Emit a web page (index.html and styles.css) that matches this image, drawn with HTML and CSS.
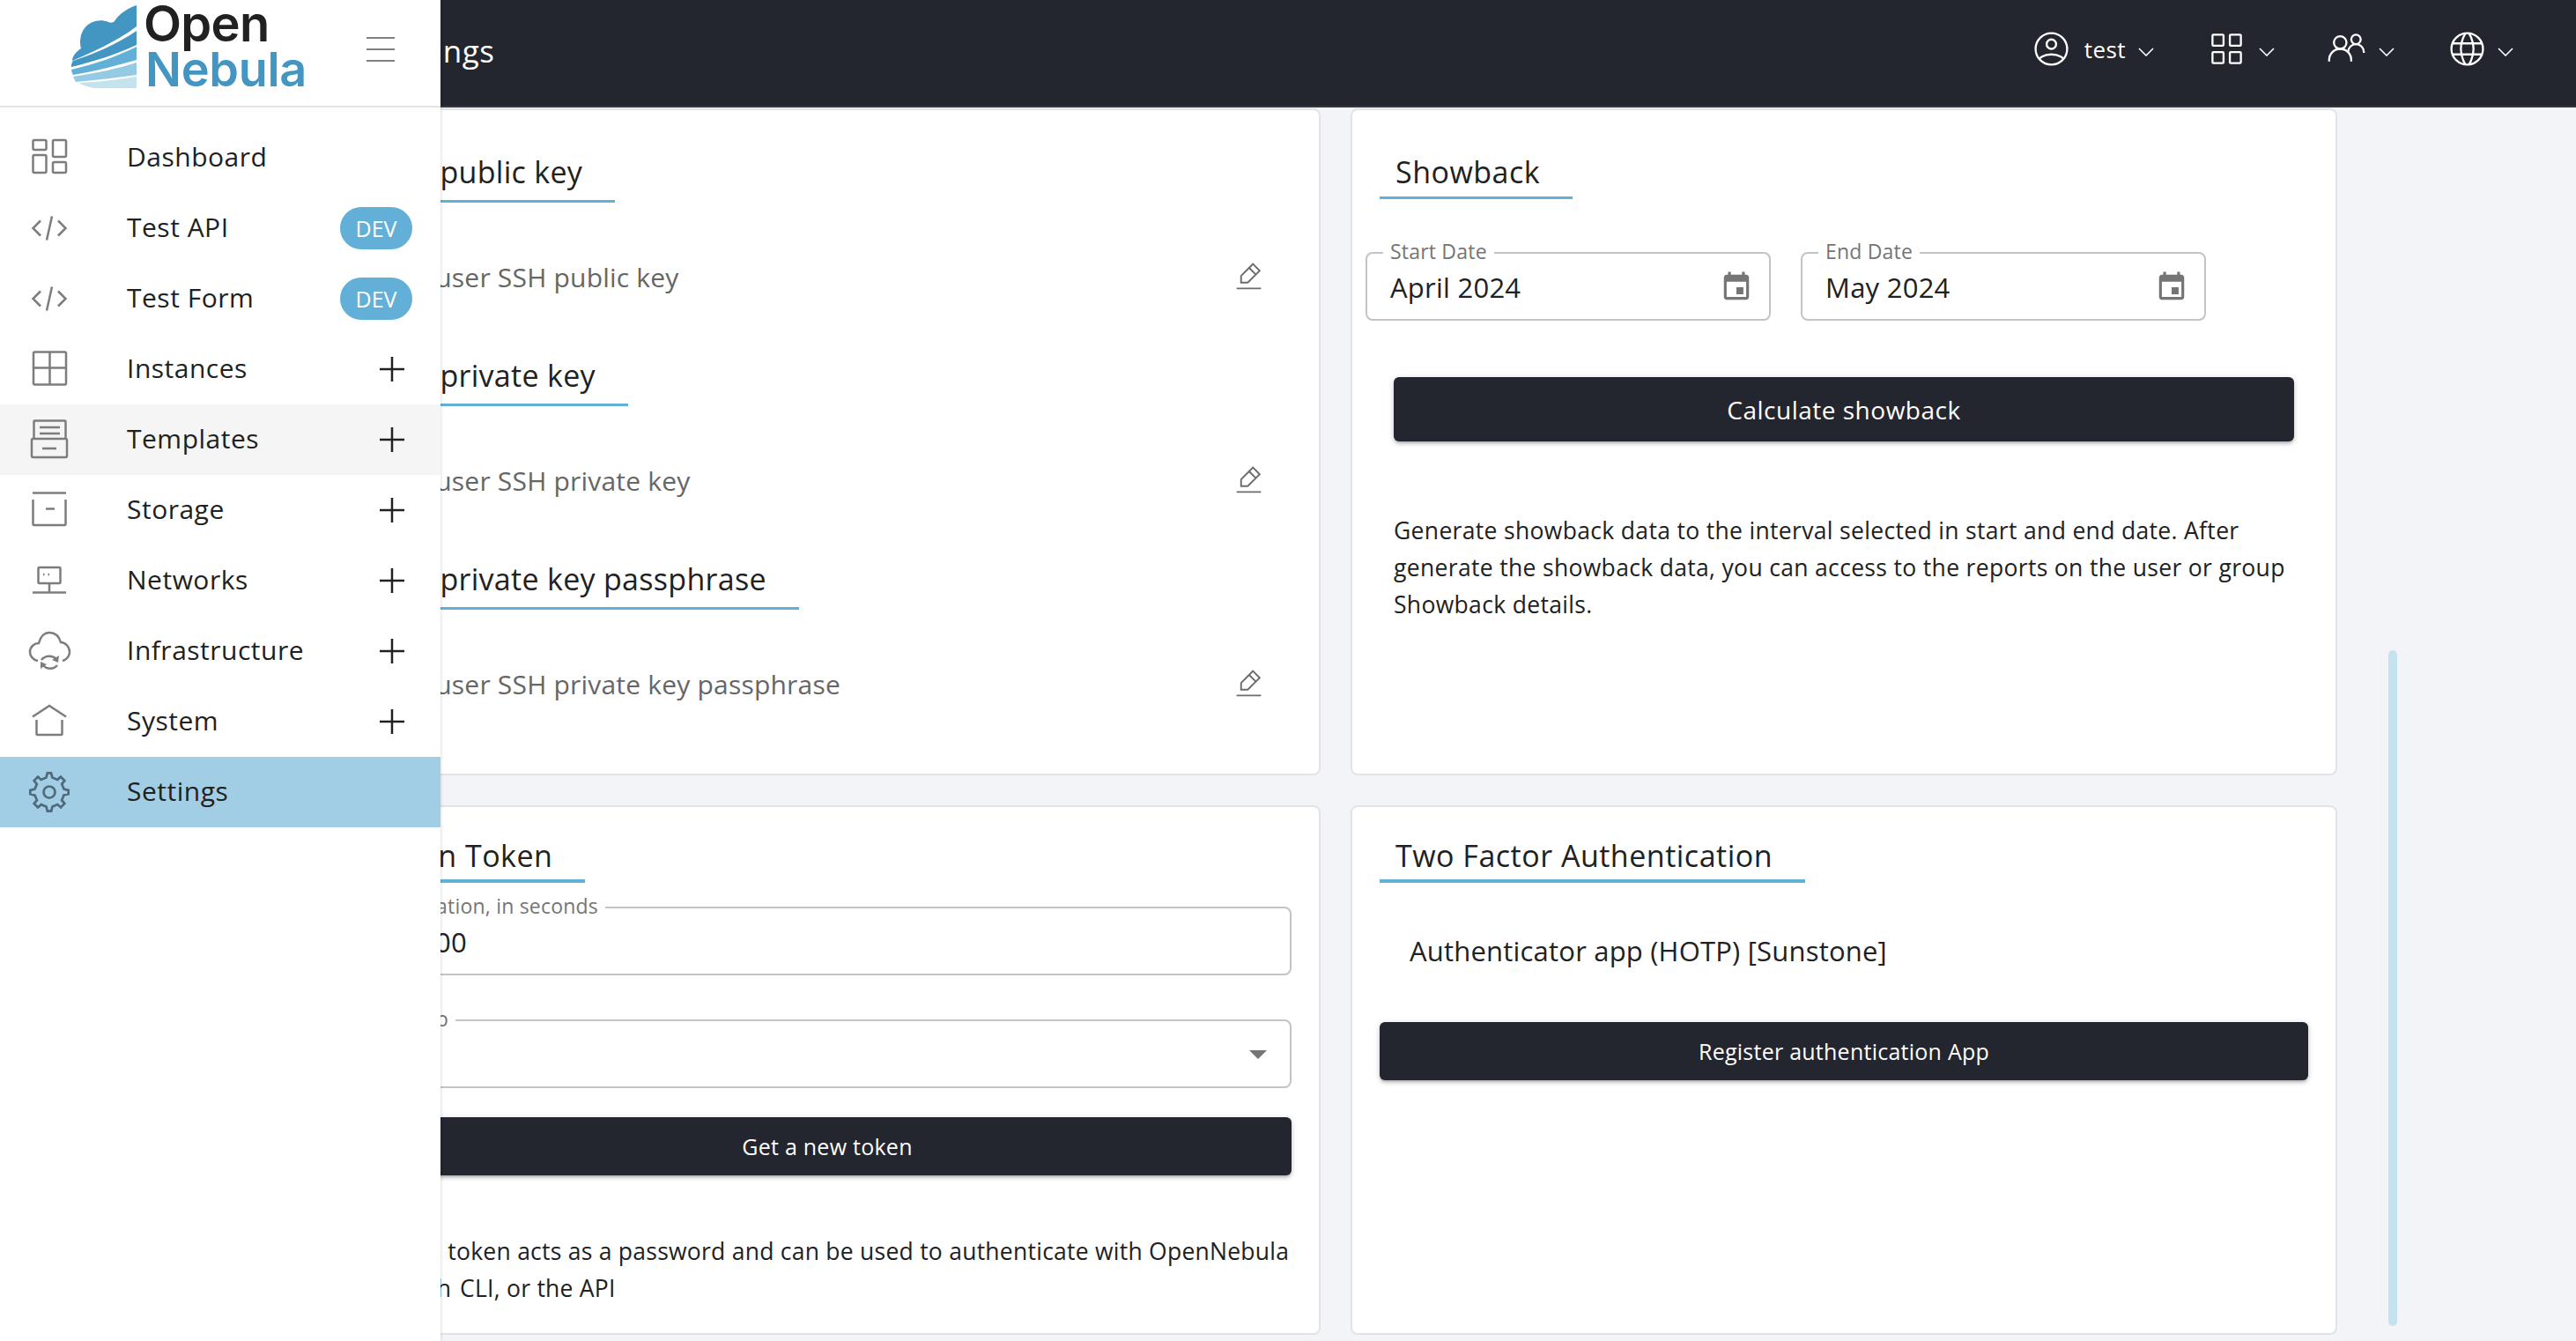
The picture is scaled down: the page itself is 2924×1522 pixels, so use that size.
FILE: index.html
```html
<!DOCTYPE html>
<html lang="en">
<head>
<meta charset="utf-8">
<title>Settings</title>
<link rel="stylesheet" href="styles.css">
</head>
<body>
<div class="app">
  <header class="topbar">
    <h1 class="page-title">Settings</h1>
    <div class="top-actions">
      <div class="top-item user">
        <svg class="ti" viewBox="0 0 24 24"><path d="M12 2C6.477 2 2 6.477 2 12s4.477 10 10 10 10-4.477 10-10S17.523 2 12 2z"/><path d="M4.271 18.346S6.5 15.5 12 15.5s7.73 2.846 7.73 2.846M12 12a3 3 0 100-6 3 3 0 000 6z"/></svg>
        <span class="top-name">test</span>
        <svg class="chev" viewBox="0 0 18 10"><path d="M1 1l8 8 8-8"/></svg>
      </div>
      <div class="top-item views">
        <svg class="ti" viewBox="0 0 24 24"><path d="M14 20.4v-5.8a.6.6 0 01.6-.6h5.8a.6.6 0 01.6.6v5.8a.6.6 0 01-.6.6h-5.8a.6.6 0 01-.6-.6zM3 20.4v-5.8a.6.6 0 01.6-.6h5.8a.6.6 0 01.6.6v5.8a.6.6 0 01-.6.6H3.6a.6.6 0 01-.6-.6zM14 9.4V3.6a.6.6 0 01.6-.6h5.8a.6.6 0 01.6.6v5.8a.6.6 0 01-.6.6h-5.8a.6.6 0 01-.6-.6zM3 9.4V3.6a.6.6 0 01.6-.6h5.8a.6.6 0 01.6.6v5.8a.6.6 0 01-.6.6H3.6a.6.6 0 01-.6-.6z"/></svg>
        <svg class="chev" viewBox="0 0 18 10"><path d="M1 1l8 8 8-8"/></svg>
      </div>
      <div class="top-item groups">
        <svg class="ti" viewBox="0 0 24 24"><path d="M1 20v-1a7 7 0 0114 0v1"/><path d="M13 14a5 5 0 0110 0v.5"/><path d="M8 12a4 4 0 100-8 4 4 0 000 8zM18 9a3 3 0 100-6 3 3 0 000 6z"/></svg>
        <svg class="chev" viewBox="0 0 18 10"><path d="M1 1l8 8 8-8"/></svg>
      </div>
      <div class="top-item lang">
        <svg class="ti" viewBox="0 0 24 24"><path d="M2 12c0 5.523 4.477 10 10 10s10-4.477 10-10S17.523 2 12 2 2 6.477 2 12z"/><path d="M13 2.05S16 6 16 12c0 6-3 9.95-3 9.95M11 21.95S8 18 8 12c0-6 3-9.95 3-9.95M2.63 15.5h18.74M2.63 8.5h18.74"/></svg>
        <svg class="chev" viewBox="0 0 18 10"><path d="M1 1l8 8 8-8"/></svg>
      </div>
    </div>
  </header>

  <main class="content">
    <section class="card keys">
      <h2 class="ctitle">SSH public key</h2>
      <div class="key-row"><span>Add user SSH public key</span><svg class="edit" viewBox="0 0 24 24"><path d="M3 21h18M12.222 5.828L15.05 3 20 7.95l-2.828 2.828m-4.95-4.95l-5.607 5.607a1 1 0 00-.293.707v4.536h4.536a1 1 0 00.707-.293l5.607-5.607m-4.95-4.95l4.95 4.95"/></svg></div>
      <h2 class="ctitle next">SSH private key</h2>
      <div class="key-row"><span>Add user SSH private key</span><svg class="edit" viewBox="0 0 24 24"><path d="M3 21h18M12.222 5.828L15.05 3 20 7.95l-2.828 2.828m-4.95-4.95l-5.607 5.607a1 1 0 00-.293.707v4.536h4.536a1 1 0 00.707-.293l5.607-5.607m-4.95-4.95l4.95 4.95"/></svg></div>
      <h2 class="ctitle next">SSH private key passphrase</h2>
      <div class="key-row"><span>Add user SSH private key passphrase</span><svg class="edit" viewBox="0 0 24 24"><path d="M3 21h18M12.222 5.828L15.05 3 20 7.95l-2.828 2.828m-4.95-4.95l-5.607 5.607a1 1 0 00-.293.707v4.536h4.536a1 1 0 00.707-.293l5.607-5.607m-4.95-4.95l4.95 4.95"/></svg></div>
    </section>

    <section class="card showback">
      <h2 class="ctitle">Showback</h2>
      <div class="dates">
        <div class="field date"><span class="flabel">Start Date</span><span class="fvalue">April 2024</span><svg class="cal" viewBox="0 0 24 24"><path d="M17 12h-5v5h5v-5zM16 1v2H8V1H6v2H5c-1.11 0-1.99.9-1.99 2L3 19c0 1.1.89 2 2 2h14c1.1 0 2-.9 2-2V5c0-1.1-.9-2-2-2h-1V1h-2zm3 18H5V8h14v11z"/></svg></div>
        <div class="field date"><span class="flabel">End Date</span><span class="fvalue">May 2024</span><svg class="cal" viewBox="0 0 24 24"><path d="M17 12h-5v5h5v-5zM16 1v2H8V1H6v2H5c-1.11 0-1.99.9-1.99 2L3 19c0 1.1.89 2 2 2h14c1.1 0 2-.9 2-2V5c0-1.1-.9-2-2-2h-1V1h-2zm3 18H5V8h14v11z"/></svg></div>
      </div>
      <button class="btn calc">Calculate showback</button>
      <p class="desc sb-desc">Generate showback data to the interval selected in start and end date. After generate the showback data, you can access to the reports on the user or group Showback details.</p>
    </section>

    <section class="card token">
      <h2 class="ctitle">Login Token</h2>
      <div class="field wide first"><span class="flabel">Expiration, in seconds</span><span class="fvalue">36000</span></div>
      <div class="field wide second"><span class="flabel">Group</span><span class="arrow"></span></div>
      <button class="btn small new-token">Get a new token</button>
      <p class="desc tk-desc">This token acts as a password and can be used to authenticate with OpenNebula <span class="tk-with">with</span> CLI, or the API</p>
    </section>

    <section class="card tfa">
      <h2 class="ctitle">Two Factor Authentication</h2>
      <p class="tfa-name">Authenticator app (HOTP) [Sunstone]</p>
      <button class="btn small register">Register authentication App</button>
    </section>
  </main>
  <div class="scroll-thumb"></div>

  <aside class="sidebar">
    <div class="brand">
      <svg class="cloud" viewBox="0 0 74 94">
        <path class="c1" d="M74 0V24C50 42 24 53 1 63C1 58 5 53 11 49C9 42 10 32 15 26C21 18 33 15 42 19C44 20 47 20 49 18C54 10 64 3 74 0Z"/>
        <path class="c1" d="M74 29V45C50 56 25 64 0 70C0 68 0 65 2 63C26 55 52 44 74 29Z"/>
        <path class="c2" d="M74 47V62C50 69 25 75 2 79C1 77 0 75 0 73C26 67 52 58 74 47Z"/>
        <path class="c3" d="M74 65V79C52 82 28 85 5 87C4 85 3 83 2 81C28 77 52 72 74 65Z"/>
        <path class="c4" d="M74 81V94H26C19 93 13 91 8 88C32 87 54 84 74 81Z"/>
      </svg>
      <div class="wordmark"><span class="w-open">Open</span><span class="w-neb">Nebula</span></div>
      <div class="burger"><i></i><i></i><i></i></div>
    </div>
    <nav class="menu">
      <a class="item"><svg class="mi" viewBox="0 0 44 44"><rect x="3.500" y="2" width="15" height="11" rx="1.500"/><rect x="3.500" y="19" width="15" height="20" rx="1.500"/><rect x="26" y="2" width="15" height="19" rx="1.500"/><rect x="26" y="27" width="15" height="12" rx="1.500"/></svg><span>Dashboard</span></a>
      <a class="item"><svg class="mi" viewBox="0 0 44 44"><path d="M12 13.500L3.500 22l8.500 8.500M32 13.500l8.500 8.500-8.500 8.500M25 8.500L19 35.500"/></svg><span>Test API</span><b class="badge">DEV</b></a>
      <a class="item"><svg class="mi" viewBox="0 0 44 44"><path d="M12 13.500L3.500 22l8.500 8.500M32 13.500l8.500 8.500-8.500 8.500M25 8.500L19 35.500"/></svg><span>Test Form</span><b class="badge">DEV</b></a>
      <a class="item"><svg class="mi" viewBox="0 0 44 44"><rect x="4" y="2.500" width="37" height="37" rx="1.500"/><path d="M22.500 2.500v37M4 20.500h37"/></svg><span>Instances</span><svg class="plus" viewBox="0 0 28 28"><path d="M14 0v28M0 14h28"/></svg></a>
      <a class="item hover"><svg class="mi" viewBox="0 0 44 44"><path d="M4.500 21V1.500a1 1 0 011-1h34a1 1 0 011 1V21"/><rect x="2" y="21" width="40" height="21" rx="1.500"/><path d="M11 8h23M11 15h23M14 32h16"/></svg><span>Templates</span><svg class="plus" viewBox="0 0 28 28"><path d="M14 0v28M0 14h28"/></svg></a>
      <a class="item"><svg class="mi" viewBox="0 0 44 44"><path d="M3 2.500h38M3.500 10v28a1 1 0 001 1h35a1 1 0 001-1V10M18 20.500h10"/></svg><span>Storage</span><svg class="plus" viewBox="0 0 28 28"><path d="M14 0v28M0 14h28"/></svg></a>
      <a class="item"><svg class="mi" viewBox="0 0 44 44"><rect x="9.500" y="7" width="25" height="18" rx="1"/><path d="M15 15h1.500M20.500 15H22M22 25v10M3 35.500h38"/></svg><span>Networks</span><svg class="plus" viewBox="0 0 28 28"><path d="M14 0v28M0 14h28"/></svg></a>
      <a class="item"><svg class="mi" viewBox="0 0 44 44"><path d="M9 33C3 32 0 27 0 23C0 17 5 13 10 13C12 5 17 1 22 1C28 1 33 5 35 12C40 12 45 17 45 23C45 28 41 32 37 33"/><path d="M13 32C17 27 25 26 30 31M31 38C27 43 19 43 15 38"/><path class="mi-fill" d="M33 27l-1 8-7-3zM12 42l0-8 7 3z"/></svg><span>Infrastructure</span><svg class="plus" viewBox="0 0 28 28"><path d="M14 0v28M0 14h28"/></svg></a>
      <a class="item"><svg class="mi" viewBox="0 0 44 44"><path d="M3 16.500L22 4l19 12.500M7.500 20v16a1 1 0 001 1h27a1 1 0 001-1V20"/></svg><span>System</span><svg class="plus" viewBox="0 0 28 28"><path d="M14 0v28M0 14h28"/></svg></a>
      <a class="item active"><svg class="mi gear" viewBox="0 0 24 24"><path d="M12 15a3 3 0 100-6 3 3 0 000 6z"/><path d="M19.622 10.395l-1.097-2.65L20 6l-2-2-1.735 1.483-2.707-1.113L12.935 2h-1.954l-.632 2.401-2.645 1.115L6 4 4 6l1.453 1.789-1.08 2.657L2 11v2l2.401.655L5.516 16.3 4 18l2 2 1.791-1.46 2.606 1.072L11 22h2l.604-2.387 2.651-1.098C16.697 18.831 18 20 18 20l2-2-1.484-1.75 1.098-2.652 2.386-.62V11l-2.378-.605z"/></svg><span>Settings</span></a>
    </nav>
  </aside>
</div>
</body>
</html>
```

FILE: styles.css
```css
* { box-sizing: border-box; }
html, body { margin: 0; height: 100%; overflow: hidden; }
body {
  font-family: "Open Sans", "Noto Sans", sans-serif;
  color: #212121;
  background: #f2f4f8;
}
.app { position: relative; width: 2924px; height: 1522px; overflow: hidden; }

/* top bar */
.topbar {
  height: 122px;
  background: #23252f;
  border-bottom: 2px solid #343640;
  display: flex;
  align-items: center;
  justify-content: space-between;
  padding-left: 427px;
}
.page-title { margin: -4px 0 0; font-size: 35px; font-weight: 400; color: #fff; line-height: 44px; letter-spacing: .6px; }
.top-actions { display: flex; align-items: center; padding-right: 71px; margin-top: -9px; }
.top-item { display: flex; align-items: center; }
.ti { width: 43px; height: 43px; fill: none; stroke: #fff; stroke-width: 1.3; }
.top-name { color: #fff; font-size: 26px; margin: 0 14px 0 16px; line-height: 36px; letter-spacing: .4px; }
.chev { width: 18px; height: 10px; margin-left: 15px; margin-top: 6px; fill: none; stroke: #fff; stroke-width: 1.6; }
.user .chev { margin-left: 0; }
.lang .chev { margin-left: 13px; }
.views { margin-left: 61px; }
.groups { margin-left: 60px; }
.lang { margin-left: 61px; }

/* content */
.content {
  display: grid;
  grid-template-columns: 1119px 1120px;
  grid-template-rows: 757px 601px;
  column-gap: 34px;
  row-gap: 34px;
  padding: 1px 0 0 380px;
}
.card {
  background: #fff;
  border: 2px solid #e2e3e6;
  border-radius: 8px;
  padding: 0 33px 0 31px;
  min-width: 0;
}
.keys, .token { padding-left: 30px; }
.ctitle {
  display: table;
  margin: 0;
  font-size: 34px;
  font-weight: 400;
  line-height: 44px;
  letter-spacing: .5px;
  color: #212121;
  padding: 0 37px 10px 18px;
  border-bottom: 3px solid #62b0d8;
}
.keys .ctitle { margin-top: 48px; letter-spacing: .3px; padding-left: 15px; }
.keys .ctitle.next { margin-top: 66px; }
.key-row {
  display: flex;
  align-items: center;
  justify-content: space-between;
  height: 48px;
  margin-top: 60px;
  padding: 0 28px 0 18px;
  font-size: 30px;
  letter-spacing: .2px;
  color: #666;
}
.edit { width: 37px; height: 37px; fill: none; stroke: #6b6b6b; stroke-width: 1.25; margin-top: -2px; }

.showback .ctitle { margin-top: 48px; padding-bottom: 6px; }
.dates { display: flex; gap: 34px; margin: 60px 0 0 -16px; }
.field {
  position: relative;
  height: 78px;
  border: 2px solid #c4c4c4;
  border-radius: 8px;
  display: flex;
  align-items: center;
  padding: 1px 18px 0 26px;
}
.date { width: 460px; justify-content: space-between; }
.flabel {
  position: absolute;
  left: 18px;
  top: -18px;
  padding: 0 8px;
  background: #fff;
  font-size: 23px;
  letter-spacing: .2px;
  line-height: 30px;
  color: #757575;
}
.fvalue { font-size: 31px; letter-spacing: .25px; line-height: 40px; color: #212121; }
.cal { width: 38px; height: 38px; fill: #757575; margin-top: 0; }
.btn {
  display: block;
  border: 0;
  background: #23252f;
  color: #fff;
  font-family: inherit;
  font-size: 28px;
  letter-spacing: .5px;
  border-radius: 6px;
  box-shadow: 0 3px 3px -2px rgba(0,0,0,.2), 0 3px 4px 0 rgba(0,0,0,.14), 0 1px 8px 0 rgba(0,0,0,.12);
}
.btn.small { font-size: 25px; letter-spacing: .25px; height: 66px; padding-bottom: 2px; }
.calc { width: 1022px; height: 73px; margin: 64px 0 0 16px; }
.desc { margin: 0; font-size: 26.500px; letter-spacing: .33px; line-height: 42px; color: #212121; }
.sb-desc { margin: 80px 0 0 16px; width: 1022px; }

.token .ctitle, .tfa .ctitle { margin-top: 33px; padding-bottom: 5px; border-bottom-width: 4px; }
.wide { width: 1054px; }
.first { margin-top: 27px; }
.second { margin-top: 50px; }
.arrow {
  position: absolute;
  right: 26px;
  top: 33px;
  width: 0;
  height: 0;
  border-left: 10px solid transparent;
  border-right: 10px solid transparent;
  border-top: 10px solid #757575;
}
.new-token { width: 1054px; margin-top: 33px; }
.tk-desc { margin: 65px 0 0 38px; width: 1035px; letter-spacing: .25px; }
.tk-with { letter-spacing: 3px; }
.tfa-name { margin: 53px 0 0 34px; font-size: 31px; letter-spacing: .2px; line-height: 48px; color: #212121; }
.register { width: 1054px; margin-top: 57px; }

.scroll-thumb {
  position: absolute;
  left: 2711px;
  top: 738px;
  width: 10px;
  height: 767px;
  border-radius: 5px;
  background: #c5e3ee;
}

/* sidebar */
.sidebar {
  position: absolute;
  left: 0;
  top: 0;
  bottom: 0;
  width: 500px;
  background: #fff;
  box-shadow: 0 0 4px rgba(0,0,0,.18);
}
.brand {
  position: relative;
  height: 122px;
  border-bottom: 2px solid #e3e3e3;
  display: flex;
  align-items: flex-start;
  padding: 6px 0 0 81px;
}
.cloud { width: 74px; height: 94px; flex: none; }
.c1 { fill: #4396c2; }
.c2 { fill: #62b0d8; }
.c3 { fill: #94cae3; }
.c4 { fill: #c5e3ef; }
.wordmark { display: flex; flex-direction: column; gap: 6px; margin: -2px 0 0 8px; font-family: Inter, sans-serif; font-weight: 600; }
.w-open { font-size: 56px; line-height: 46px; color: #212121; letter-spacing: -.7px; }
.w-neb { font-size: 54px; line-height: 46px; color: #4396c2; margin-left: 2px; letter-spacing: -.3px; }
.burger {
  position: absolute;
  left: 416px;
  top: 42px;
  width: 32px;
  height: 28px;
  display: flex;
  flex-direction: column;
  justify-content: space-between;
}
.burger i { display: block; height: 2px; background: #808080; }

.menu { padding-top: 17px; }
.item {
  display: flex;
  align-items: center;
  height: 80px;
  padding: 0 32px 0 34px;
  font-size: 30px;
  letter-spacing: .5px;
  color: #212121;
}
.item > span { margin-top: -3px; }
.item.hover { background: #f5f5f5; }
.item.active { background: #a1cee5; }
.mi { width: 44px; height: 44px; flex: none; overflow: visible; fill: none; stroke: #7d7d7d; stroke-width: 2.500; margin-right: 67px; }
.item > .mi { margin-right: 66px; }
.mi-fill { fill: #7d7d7d; stroke: none; }
.item > .gear { width: 52px; height: 52px; margin: 0 62px 0 -4px; stroke: #4f6b7b; stroke-width: 1.250; }
.badge {
  margin-left: auto;
  width: 82px;
  height: 48px;
  border-radius: 24px;
  background: #62b0d8;
  color: #fff;
  font-weight: 400;
  font-size: 25px;
  letter-spacing: 0;
  line-height: 48px;
  text-align: center;
}
.plus { width: 28px; height: 28px; margin-left: auto; margin-right: 9px; fill: none; stroke: #212121; stroke-width: 2.500; }
```
